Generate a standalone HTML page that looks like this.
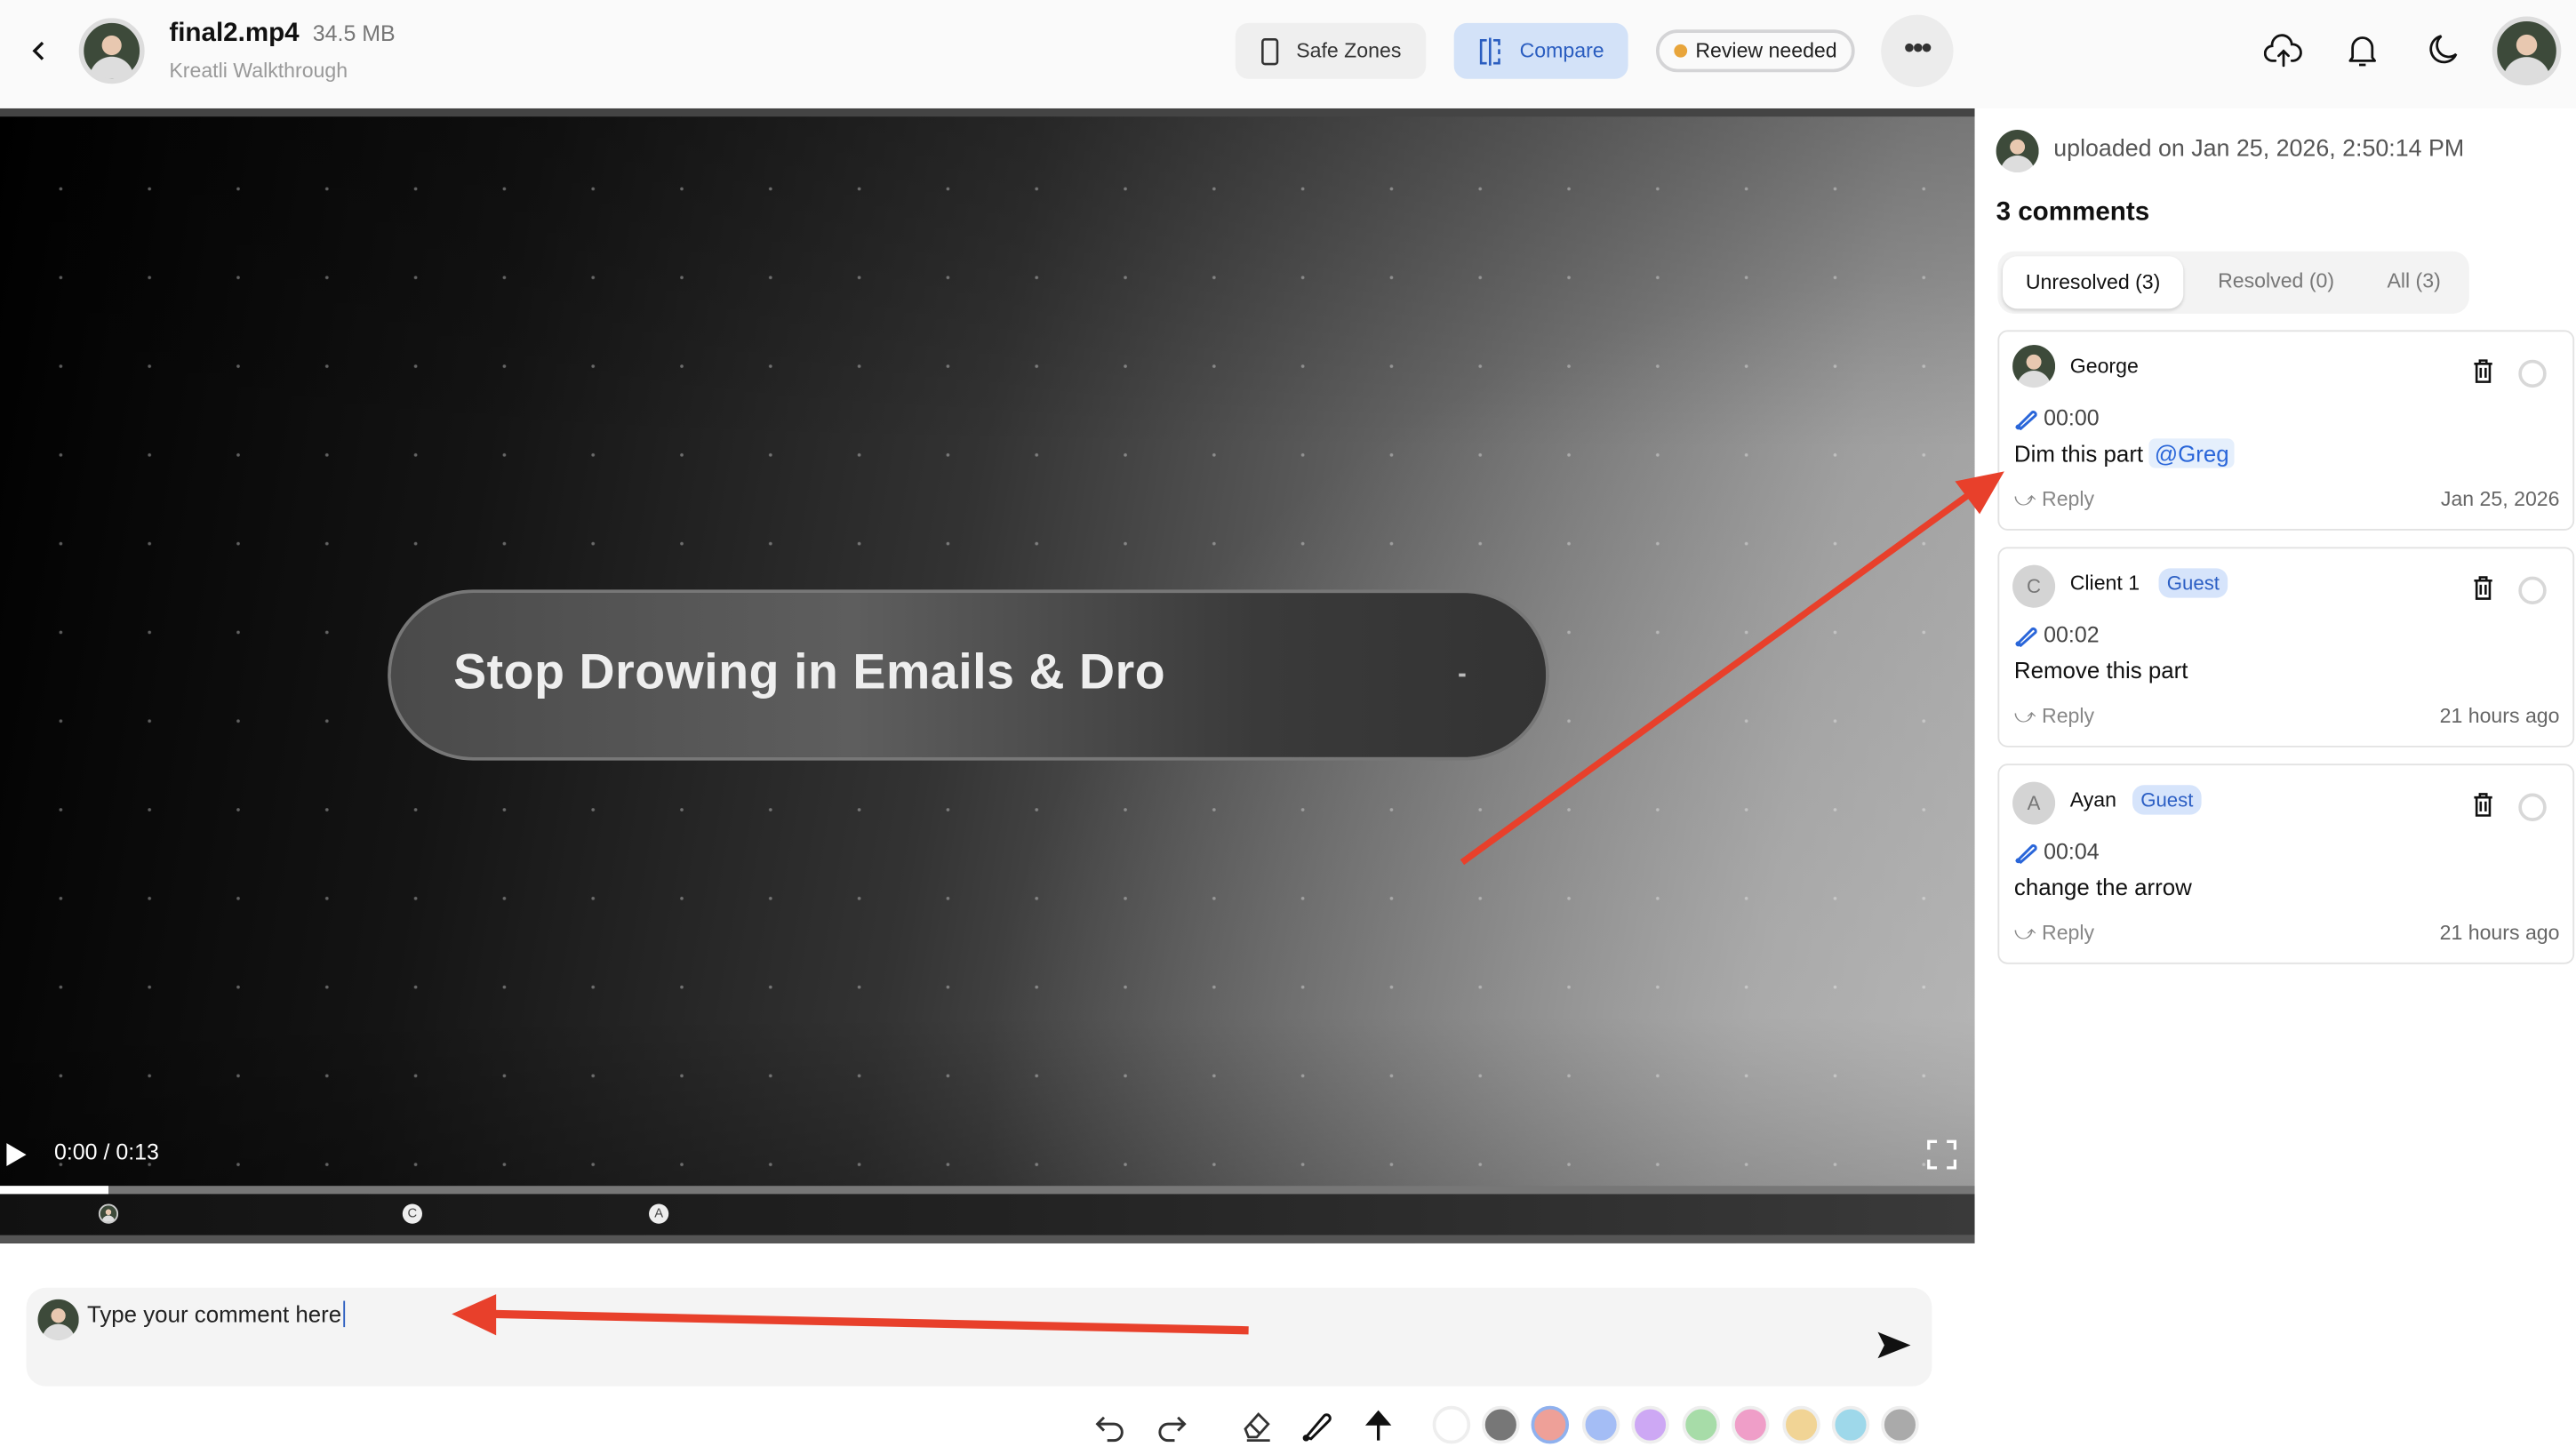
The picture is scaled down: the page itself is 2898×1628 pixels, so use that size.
<!DOCTYPE html>
<html><head><meta charset="utf-8"><style>
*{box-sizing:border-box;margin:0;padding:0}
html,body{width:2898px;height:1628px;overflow:hidden;background:#fff}
#w{position:absolute;left:0;top:0;width:1568px;height:881px;transform:scale(1.84821,1.84791);transform-origin:0 0;font-family:"Liberation Sans",sans-serif;color:#111}
.a{position:absolute}
.av{position:absolute;border-radius:50%;background:radial-gradient(circle at 50% 40%,#e8c8b0 0 22%,transparent 23%),radial-gradient(circle at 50% 100%,#ddd 0 35%,transparent 36%),#3d4a3a;}
.btn{position:absolute;top:14px;height:34px;border-radius:8px;font-size:12.5px;display:flex;align-items:center}
.card{position:absolute;left:1216px;width:351px;height:122px;border:1px solid #e2e2e2;border-radius:6px;background:#fff}
.nm{position:absolute;left:43px;top:14px;font-size:12.5px}
.gst{position:absolute;top:12px;background:#d6e4fb;color:#2c5fc4;border-radius:7px;font-size:12px;padding:2px 5px}
.ts{position:absolute;left:9px;top:45px;font-size:13.5px;color:#444;display:flex;align-items:center;gap:4px}
.tx{position:absolute;left:9px;top:66px;font-size:14px}
.rp{position:absolute;left:9px;top:95px;font-size:12.5px;color:#888}
.dt{position:absolute;right:8px;top:95px;font-size:12.5px;color:#666}
.ic{position:absolute;right:48px;top:16px}
.rc{position:absolute;right:16px;top:17px;width:17px;height:17px;border:2px solid #d8d8d8;border-radius:50%}
.ci{position:absolute;left:8px;top:10px;width:26px;height:26px;border-radius:50%;background:#d4d4d4;color:#777;font-size:12px;display:flex;align-items:center;justify-content:center}
.sw{position:absolute;top:856px;width:23px;height:23px;border-radius:50%;border:2px solid #eee}
</style></head><body><div id="w">
<!-- header -->
<div class="a" style="left:0;top:0;width:1568px;height:66px;background:#fafafa"></div>
<svg class="a" style="left:18px;top:24px" width="12" height="14"><path d="M8 2 L3 7 L8 12" stroke="#111" stroke-width="1.8" fill="none"/></svg>
<div class="av" style="left:48px;top:11px;width:40px;height:40px;border:3px solid #ddd"></div>
<div class="a" style="left:103px;top:12px;font-size:16px;font-weight:bold">final2.mp4 <span style="font-weight:normal;color:#777;font-size:13.5px">&nbsp;34.5 MB</span></div>
<div class="a" style="left:103px;top:36px;font-size:12.5px;color:#999">Kreatli Walkthrough</div>
<div class="btn" style="left:752px;width:116px;background:#efefef;color:#333"><svg style="margin:0 10px 0 15px" width="12" height="17"><rect x="1.5" y="1" width="9" height="15" rx="1.5" stroke="#333" stroke-width="1.4" fill="none"/></svg>Safe Zones</div>
<div class="btn" style="left:885px;width:106px;background:#d3e2f8;color:#2a5dc0"><svg style="margin:0 10px 0 14px" width="16" height="17"><path d="M6 1.5H2.5v14H6M10 1.5h3.5v3M13.5 7v3M13.5 12.5v3H10M8 0v17" stroke="#2a5dc0" stroke-width="1.4" fill="none"/></svg>Compare</div>
<div class="btn" style="left:1008px;top:18px;width:121px;height:26px;border:2px solid #d4d4d6;border-radius:13px;background:#fafafa;color:#222;font-size:12.5px"><span style="width:8px;height:8px;border-radius:50%;background:#e8a53b;margin:0 5px 0 9px"></span>Review needed</div>
<div class="a" style="left:1145px;top:9px;width:44px;height:44px;border-radius:50%;background:#ececec;text-align:center;line-height:40px;font-size:18px;letter-spacing:-1px;font-weight:bold;color:#333">•••</div>
<svg class="a" style="left:1378px;top:20px" width="24" height="22"><path d="M7 17H5.5a4.5 4.5 0 0 1-.5-9A6 6 0 0 1 17 7a4.5 4.5 0 0 1 1 10h-1M12 20v-9M9 14l3-3 3 3" stroke="#111" stroke-width="1.5" fill="none" stroke-linecap="round"/></svg>
<svg class="a" style="left:1428px;top:20px" width="20" height="22"><path d="M4 15V9a6 6 0 0 1 12 0v6l1.5 2h-15zM8 19.5h4" stroke="#111" stroke-width="1.5" fill="none" stroke-linejoin="round"/></svg>
<svg class="a" style="left:1477px;top:20px" width="20" height="22"><path d="M9 2a8 8 0 1 0 9 11A7 7 0 0 1 9 2z" stroke="#111" stroke-width="1.5" fill="none"/></svg>
<div class="av" style="left:1517px;top:10px;width:42px;height:42px;border:3px solid #ddd"></div>
<!-- video -->
<div class="a" style="left:0;top:66px;width:1202px;height:691px;overflow:hidden;background:linear-gradient(100deg,#000 0%,#141414 25%,#333 48%,#6a6a6a 70%,#9a9a9a 88%,#a8a8a8 100%)">
<div class="a" style="left:0;top:0;width:1202px;height:691px;background:radial-gradient(ellipse 600px 500px at 1200px 600px,rgba(200,200,200,.45),transparent),linear-gradient(180deg,rgba(0,0,0,.25),transparent 30%,transparent 80%,rgba(0,0,0,.35))"></div>
<div class="a" style="left:0;top:0;width:1202px;height:691px;background-image:radial-gradient(circle,rgba(255,255,255,.35) 0.8px,transparent 1.2px);background-size:54px 54px;background-position:10px 22px"></div>
<div class="a" style="left:0;top:0;width:1202px;height:5px;background:#444"></div>
<div class="a" style="left:236px;top:293px;width:707px;height:104px;border-radius:52px;border:2px solid #777;background:linear-gradient(90deg,#4a4a4a,#5e5e5e 40%,#3a3a3a 75%,#333)"></div>
<div class="a" style="left:276px;top:327px;font-size:30px;font-weight:bold;color:#eee;letter-spacing:.3px">Stop Drowing in Emails &amp; Dro</div>
<div class="a" style="left:888px;top:344px;width:4px;height:2px;background:#bbb"></div>
<svg class="a" style="left:2px;top:629px" width="16" height="16"><path d="M2 1L14 8L2 15Z" fill="#fff"/></svg>
<div class="a" style="left:33px;top:628px;font-size:13.5px;color:#fff">0:00 / 0:13</div>
<svg class="a" style="left:1173px;top:628px" width="18" height="18"><path d="M1 6V1h5M12 1h5v5M17 12v5h-5M6 17H1v-5" stroke="#fff" stroke-width="1.8" fill="none"/></svg>
<div class="a" style="left:0;top:656px;width:1202px;height:5px;background:#777"></div>
<div class="a" style="left:0;top:656px;width:66px;height:5px;background:#fff"></div>
<div class="a" style="left:0;top:661px;width:1202px;height:25px;background:linear-gradient(90deg,#111,#222 50%,#3a3a3a)"></div>
<div class="av" style="left:60px;top:667px;width:12px;height:12px;border:1px solid #ccc"></div>
<div class="a" style="left:245px;top:667px;width:12px;height:12px;border-radius:50%;background:#eee;font-size:8px;color:#444;text-align:center;line-height:12px">C</div>
<div class="a" style="left:395px;top:667px;width:12px;height:12px;border-radius:50%;background:#eee;font-size:8px;color:#444;text-align:center;line-height:12px">A</div>
<div class="a" style="left:0;top:686px;width:1202px;height:5px;background:#555"></div>
</div>
<!-- right panel -->
<div class="av" style="left:1215px;top:79px;width:26px;height:26px"></div>
<div class="a" style="left:1250px;top:83px;font-size:14.5px;color:#555">uploaded on Jan 25, 2026, 2:50:14 PM</div>
<div class="a" style="left:1215px;top:121px;font-size:16px;font-weight:bold">3 comments</div>
<div class="a" style="left:1216px;top:153px;width:287px;height:38px;border-radius:10px;background:#f3f3f3"></div>
<div class="a" style="left:1219px;top:156px;width:110px;height:32px;border-radius:9px;background:#fff;box-shadow:0 1px 2px rgba(0,0,0,.15);font-size:12.5px;text-align:center;line-height:32px">Unresolved (3)</div>
<div class="a" style="left:1350px;top:164px;font-size:12.5px;color:#777">Resolved (0)</div>
<div class="a" style="left:1453px;top:164px;font-size:12.5px;color:#777">All (3)</div>

<div class="card" style="top:201px"><div class="av" style="left:8px;top:8px;width:26px;height:26px"></div><div class="nm">George</div>
<svg class="ic" width="13" height="16"><path d="M1 3.5h11M4.5 3.5V1.5h4v2M2.5 3.5v11h8v-11M5 6v6M8 6v6" stroke="#111" stroke-width="1.4" fill="none"/></svg><div class="rc"></div>
<div class="ts"><svg width="14" height="14"><path d="M2 12L11 3a1.5 1.5 0 0 1 2 2L4 13z" fill="none" stroke="#2a66d9" stroke-width="1.6"/><circle cx="2.5" cy="12" r="1.6" fill="#2a66d9"/></svg>00:00</div>
<div class="tx">Dim this part <span style="background:#e5effc;color:#2a66d9;border-radius:4px;padding:1px 3px">@Greg</span></div>
<div class="rp">⤻ Reply</div><div class="dt">Jan 25, 2026</div></div>

<div class="card" style="top:333px"><div class="ci">C</div><div class="nm">Client 1</div><div class="gst" style="left:97px">Guest</div>
<svg class="ic" width="13" height="16"><path d="M1 3.5h11M4.5 3.5V1.5h4v2M2.5 3.5v11h8v-11M5 6v6M8 6v6" stroke="#111" stroke-width="1.4" fill="none"/></svg><div class="rc"></div>
<div class="ts"><svg width="14" height="14"><path d="M2 12L11 3a1.5 1.5 0 0 1 2 2L4 13z" fill="none" stroke="#2a66d9" stroke-width="1.6"/><circle cx="2.5" cy="12" r="1.6" fill="#2a66d9"/></svg>00:02</div>
<div class="tx">Remove this part</div>
<div class="rp">⤻ Reply</div><div class="dt">21 hours ago</div></div>

<div class="card" style="top:465px"><div class="ci">A</div><div class="nm">Ayan</div><div class="gst" style="left:81px">Guest</div>
<svg class="ic" width="13" height="16"><path d="M1 3.5h11M4.5 3.5V1.5h4v2M2.5 3.5v11h8v-11M5 6v6M8 6v6" stroke="#111" stroke-width="1.4" fill="none"/></svg><div class="rc"></div>
<div class="ts"><svg width="14" height="14"><path d="M2 12L11 3a1.5 1.5 0 0 1 2 2L4 13z" fill="none" stroke="#2a66d9" stroke-width="1.6"/><circle cx="2.5" cy="12" r="1.6" fill="#2a66d9"/></svg>00:04</div>
<div class="tx">change the arrow</div>
<div class="rp">⤻ Reply</div><div class="dt">21 hours ago</div></div>

<!-- comment box -->
<div class="a" style="left:16px;top:784px;width:1160px;height:60px;border-radius:12px;background:#f4f4f4"></div>
<div class="av" style="left:23px;top:791px;width:25px;height:25px"></div>
<div class="a" style="left:53px;top:792px;font-size:14px;color:#222">Type your comment here<span style="border-left:1px solid #2a5dc0;margin-left:1px"></span></div>
<svg class="a" style="left:1142px;top:810px" width="22" height="18"><path d="M1 1L21 9L1 17L5 9Z" fill="#111"/></svg>
<!-- toolbar -->
<svg class="a" style="left:666px;top:859px" width="20" height="20"><path d="M6 4L2 8l4 4M2 8h10a5 5 0 0 1 0 10H8" stroke="#333" stroke-width="1.6" fill="none"/></svg>
<svg class="a" style="left:703px;top:859px" width="20" height="20"><path d="M14 4l4 4-4 4M18 8H8a5 5 0 0 0 0 10h4" stroke="#333" stroke-width="1.6" fill="none"/></svg>
<svg class="a" style="left:755px;top:858px" width="20" height="20"><path d="M3 12l8-9 6 6-7 8H5z M6 9l6 6M4 19h14" stroke="#333" stroke-width="1.5" fill="none"/></svg>
<svg class="a" style="left:792px;top:858px" width="20" height="20"><path d="M3 17L14 4a2 2 0 0 1 3 3L6 18z" stroke="#111" stroke-width="1.6" fill="none"/><circle cx="3" cy="17.5" r="2" fill="#111"/></svg>
<svg class="a" style="left:830px;top:858px" width="18" height="20"><path d="M9 19V4M3 9l6-7 6 7z" stroke="#111" stroke-width="1.8" fill="#111"/></svg>
<div class="sw" style="left:872px;background:#fff"></div>
<div class="sw" style="left:902px;background:#777"></div>
<div class="sw" style="left:932px;background:#eea098;border-color:#8fb1ee"></div>
<div class="sw" style="left:963px;background:#a4bdf5"></div>
<div class="sw" style="left:993px;background:#cda8f4"></div>
<div class="sw" style="left:1024px;background:#a7dca8"></div>
<div class="sw" style="left:1054px;background:#ef9ec8"></div>
<div class="sw" style="left:1085px;background:#f1d495"></div>
<div class="sw" style="left:1115px;background:#9ed8ea"></div>
<div class="sw" style="left:1145px;background:#aaa"></div>
<!-- red arrows -->
<svg class="a" style="left:0;top:0" width="1568" height="881">
<line x1="890" y1="525" x2="1200" y2="300" stroke="#e8402b" stroke-width="4"/>
<path d="M1220 287L1190 293L1205 313Z" fill="#e8402b"/>
<line x1="760" y1="810" x2="300" y2="800" stroke="#e8402b" stroke-width="5"/>
<path d="M275 800L302 788L302 813Z" fill="#e8402b"/>
</svg>
</div></body></html>
